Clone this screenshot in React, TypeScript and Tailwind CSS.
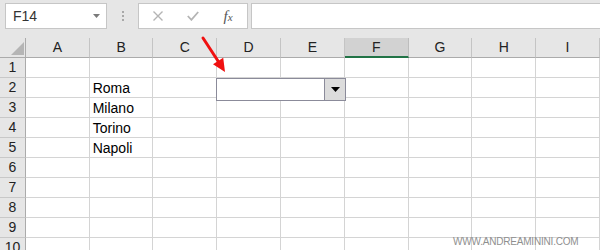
import { Fragment } from 'react';

const cols = ['A', 'B', 'C', 'D', 'E', 'F', 'G', 'H', 'I'];
const rows = [1, 2, 3, 4, 5, 6, 7, 8, 9, 10];
const cityByRow: Record<number, string> = { 2: 'Roma', 3: 'Milano', 4: 'Torino', 5: 'Napoli' };

function FormulaBar() {
  return (
    <div className="flex h-[38px] items-start pt-[3px] pl-[5px]">
      <div className="flex h-[26px] w-[102px] items-center justify-between border border-[#c6c6c6] bg-white pl-[7px] pr-[6px] text-[14px] text-[#333]">
        <span>F14</span>
        <svg width="7" height="4" viewBox="0 0 7 4">
          <path d="M0 0h7L3.5 4z" fill="#7a7a7a" />
        </svg>
      </div>
      <div className="flex w-[31px] flex-col items-center gap-[2px] pt-[8px]">
        <span className="size-[2px] bg-[#a8a8a8]" />
        <span className="size-[2px] bg-[#a8a8a8]" />
        <span className="size-[2px] bg-[#a8a8a8]" />
      </div>
      <div className="flex h-[26px] w-[110px] items-center border border-[#c6c6c6] bg-white">
        <div className="flex w-[38px] justify-center">
          <svg width="10" height="10" viewBox="0 0 10 10">
            <path d="M0.5 0.5l9 9M9.5 0.5l-9 9" stroke="#b4b4b4" strokeWidth="1.4" />
          </svg>
        </div>
        <div className="flex w-[32px] justify-center">
          <svg width="12" height="10" viewBox="0 0 12 10">
            <path d="M0.8 5l3.6 3.8L11.2 1" stroke="#b4b4b4" strokeWidth="1.8" fill="none" />
          </svg>
        </div>
        <div className="flex-1 text-center font-['Liberation_Serif',serif] text-[15px] italic leading-[24px] text-[#555]">
          <span>f</span>
          <span className="text-[11px]">x</span>
        </div>
      </div>
      <div className="ml-[3px] h-[26px] flex-1 border-y border-l border-[#c6c6c6] bg-white" />
    </div>
  );
}

function Grid() {
  return (
    <div className="relative">
      <div className="flex h-[20px]">
        <div className="relative w-[26px] border-r border-b border-[#ababab]">
          <svg className="absolute left-[11px] top-[4px]" width="13" height="13" viewBox="0 0 13 13">
            <path d="M13 0V13H0z" fill="#b5b5b5" />
          </svg>
        </div>
        {cols.map((c) => (
          <div
            key={c}
            className={
              c === 'F'
                ? 'flex w-[64px] items-center justify-center border-r border-b-2 border-r-[#bdbdbd] border-b-[#217346] bg-[#d2d2d2] text-[14px] text-[#222]'
                : 'flex w-[64px] items-center justify-center border-r border-b border-r-[#c4c4c4] border-b-[#ababab] text-[14px] text-[#222]'
            }
          >
            {c}
          </div>
        ))}
      </div>
      {rows.map((r) => (
        <div key={r} className="flex h-[20px]">
          <div className="flex w-[26px] items-center justify-center border-r border-b border-r-[#ababab] border-b-[#c8c8c8] text-[14px] text-[#222]">
            {r}
          </div>
          {cols.map((c) => (
            <Fragment key={c}>
              <div className="w-[64px] border-r border-b border-[#d4d4d4] bg-white pl-[3px] pt-[1px] text-[14px] leading-[19px] text-black">
                {c === 'B' ? cityByRow[r] : null}
              </div>
            </Fragment>
          ))}
        </div>
      ))}

      {/* data validation dropdown sitting on D2 */}
      <div className="absolute left-[216px] top-[40px] flex h-[23px] w-[130px] border border-[#8b8b9a] bg-white">
        <div className="flex-1" />
        <div className="flex w-[21px] items-center justify-center border-l border-[#8b8b9a] bg-[#dcdcdc]">
          <svg width="9" height="5" viewBox="0 0 9 5">
            <path d="M0 0h9L4.5 5z" fill="#000" />
          </svg>
        </div>
      </div>
    </div>
  );
}

export default function App() {
  return (
    <div className="relative h-[250px] w-[600px] overflow-hidden bg-[#e6e6e6] font-['Liberation_Sans',Arial,sans-serif]">
      <FormulaBar />
      <Grid />

      <svg className="absolute left-0 top-0" width="600" height="250" viewBox="0 0 600 250">
        <path d="M203 38L218 61" stroke="#f01010" strokeWidth="3" strokeLinecap="round" />
        <path d="M225 72L213 64.2L223.2 57.8z" fill="#f01010" />
      </svg>

      <div className="absolute left-[453px] top-[234px] text-[10px] tracking-[-0.2px] text-[#8f8f8f]">
        WWW.ANDREAMININI.COM
      </div>
    </div>
  );
}
